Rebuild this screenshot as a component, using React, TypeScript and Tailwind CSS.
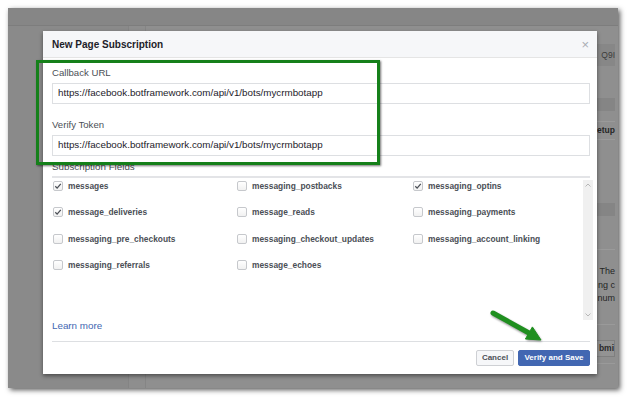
import React from "react";

type Field = { name: string; checked?: boolean };

const rows: Field[][] = [
  [{ name: "messages", checked: true }, { name: "messaging_postbacks" }, { name: "messaging_optins", checked: true }],
  [{ name: "message_deliveries", checked: true }, { name: "message_reads" }, { name: "messaging_payments" }],
  [{ name: "messaging_pre_checkouts" }, { name: "messaging_checkout_updates" }, { name: "messaging_account_linking" }],
  [{ name: "messaging_referrals" }, { name: "message_echoes" }],
];

function Check({ field }: { field: Field }) {
  return (
    <div className="flex items-center h-[16px] gap-[5px]">
      <div className="w-[10px] h-[10px] rounded-[2px] border border-[#c6c8cc] bg-gradient-to-b from-white to-[#f1f1f1] flex items-center justify-center">
        {field.checked && (
          <svg width="8" height="8" viewBox="0 0 8 8">
            <path d="M1.3 4.3 L3.1 6.1 L6.8 1.8" fill="none" stroke="#4b4f56" strokeWidth="1.3" />
          </svg>
        )}
      </div>
      <span className="text-[8.4px] font-bold text-[#4b4f56] whitespace-nowrap leading-none">{field.name}</span>
    </div>
  );
}

export default function App() {
  const url = "https://facebook.botframework.com/api/v1/bots/mycrmbotapp";
  return (
    <div className="w-[628px] h-[397px] bg-white pl-[8px] pt-[8px] font-['Liberation_Sans',Arial,sans-serif] overflow-hidden">
      <div className="relative w-[610px] h-[380px] bg-[#8b8b8b] shadow-[2px_2px_5px_rgba(0,0,0,0.65)] flex flex-col">
        {/* dimmed background page */}
        <div className="h-[18px] bg-[#868686] border-b border-[#7d7d7d]" />
        <div className="flex flex-1 min-h-0">
          <div className="w-[120px] bg-[#8a8a8a]" />
          <div className="w-[17px] bg-[#8e8e8e] border-l border-[#848484]" />
          <div className="flex-1 bg-[#8f8f8f] border-l border-[#858585] overflow-hidden pr-[3px] flex flex-col">
            <div className="mt-[1px] h-[14px]" />
            <div className="mt-[3px] h-[22px] bg-[#878787] flex items-center justify-end">
              <span className="text-[8.5px] text-[#3c3c3c] whitespace-nowrap">Q9I</span>
            </div>
            <div className="mt-[32px] h-[13px] bg-[#858585]" />
            <div className="mt-[10px] h-[1px] bg-[#9a9a9a]" />
            <div className="h-[17px] flex items-center justify-end">
              <span className="text-[8.5px] font-bold text-[#262626] whitespace-nowrap">etup</span>
            </div>
            <div className="h-[1px] bg-[#9a9a9a]" />
            <div className="mt-[63px] h-[13px] bg-[#858585]" />
            <div className="mt-[33px] h-[1px] bg-[#9a9a9a]" />
            <div className="mt-[15px] flex flex-col items-end text-[9px] leading-[13.5px] text-[#252525]">
              <span className="whitespace-nowrap">The</span>
              <span className="whitespace-nowrap">ng c</span>
              <span className="whitespace-nowrap">num</span>
            </div>
            <div className="mt-[18px] h-[1px] bg-[#9a9a9a]" />
            <div className="mt-[15px] h-[17px] bg-[#939393] border border-[#7f7f7f] flex items-center justify-end">
              <span className="text-[8.5px] font-bold text-[#2a2a2a] whitespace-nowrap">bmi</span>
            </div>
            <div className="mt-[6px] h-[1px] bg-[#9a9a9a]" />
          </div>
        </div>

        {/* dialog */}
        <div className="absolute left-[35px] top-[23px] w-[554px] h-[343px] bg-white shadow-[0_2px_4px_rgba(0,0,0,0.45)] flex flex-col">
          <div className="h-[27px] bg-[#f6f7f9] border-b border-[#e5e5e5] flex items-center justify-between pl-[9px] pr-[8px]">
            <span className="text-[10px] font-bold text-[#1d2129]">New Page Subscription</span>
            <span className="text-[13px] leading-none text-[#a9adb4]">×</span>
          </div>
          <div className="flex-1 flex flex-col pl-[9px] pr-[7px]">
            <div className="mt-[9px] h-[12px] leading-[12px] text-[9.6px] text-[#4b4f56]">Callback URL</div>
            <div className="mt-[4px] h-[21px] border border-[#dddfe2] flex items-center px-[5px] text-[9.8px] text-[#1d2129] whitespace-nowrap">{url}</div>
            <div className="mt-[15px] h-[12px] leading-[12px] text-[9.6px] text-[#4b4f56]">Verify Token</div>
            <div className="mt-[4px] h-[21px] border border-[#dddfe2] flex items-center px-[5px] text-[9.8px] text-[#1d2129] whitespace-nowrap">{url}</div>
            <div className="mt-[5px] h-[12px] leading-[12px] text-[9.8px] text-[#4b4f56]">Subscription Fields</div>
            <div className="mt-[3px] h-[2px] bg-[#e3e4e7]" />
            <div className="h-[142px] flex">
              <div className="flex-1 grid grid-cols-[184px_176px_1fr] auto-rows-[16px] gap-y-[10.4px] content-start pl-[1px]">
                {rows.flatMap((r, i) =>
                  [0, 1, 2].map((c) => (r[c] ? <Check key={`${i}-${c}`} field={r[c]} /> : <div key={`${i}-${c}`} />))
                )}
              </div>
              <div className="mt-[2px] w-[10px] mr-[-3px] bg-[#f0f0f0] flex flex-col justify-between items-center py-[3px]">
                <svg width="6" height="4" viewBox="0 0 6 4">
                  <path d="M0.5 3.5 L3 1 L5.5 3.5" fill="none" stroke="#b0b0b0" strokeWidth="0.9" />
                </svg>
                <svg width="6" height="4" viewBox="0 0 6 4">
                  <path d="M0.5 0.5 L3 3 L5.5 0.5" fill="none" stroke="#b0b0b0" strokeWidth="0.9" />
                </svg>
              </div>
            </div>
            <div className="h-[12px] leading-[12px] text-[9.8px] text-[#4267b2]">Learn more</div>
            <div className="mt-[9px] h-[1px] bg-[#dddfe2]" />
            <div className="mt-[8px] flex justify-end gap-[4px]">
              <div className="w-[38px] h-[16px] rounded-[2px] bg-[#f6f7f9] border border-[#ced0d4] flex items-center justify-center text-[8px] font-bold text-[#4b4f56]">Cancel</div>
              <div className="w-[72px] h-[16px] rounded-[2px] bg-[#4267b2] border border-[#4267b2] flex items-center justify-center text-[8px] font-bold text-white">Verify and Save</div>
            </div>
          </div>
        </div>

        {/* green highlight box */}
        <div className="absolute left-[28px] top-[52px] w-[344px] h-[105px] border-[3px] border-[#15801a] shadow-[1px_1px_2px_rgba(0,0,0,0.55)]" />

        {/* green arrow */}
        <svg className="absolute left-[478px] top-[298px]" width="64" height="48" viewBox="0 0 64 48">
          <defs>
            <filter id="sh" x="-20%" y="-20%" width="140%" height="140%">
              <feGaussianBlur stdDeviation="1" />
            </filter>
          </defs>
          <g transform="translate(1,1.5)" opacity="0.45" filter="url(#sh)">
            <line x1="7" y1="7" x2="43" y2="27" stroke="#000" strokeWidth="5" strokeLinecap="round" />
            <polygon points="55,34 46.4,20.9 39.4,33" fill="#000" />
          </g>
          <line x1="7" y1="7" x2="43" y2="27" stroke="#1f8f1f" strokeWidth="5" strokeLinecap="round" />
          <polygon points="55,34 46.4,20.9 39.4,33" fill="#1f8f1f" stroke="#1f8f1f" strokeWidth="1" strokeLinejoin="round" />
        </svg>
      </div>
    </div>
  );
}
